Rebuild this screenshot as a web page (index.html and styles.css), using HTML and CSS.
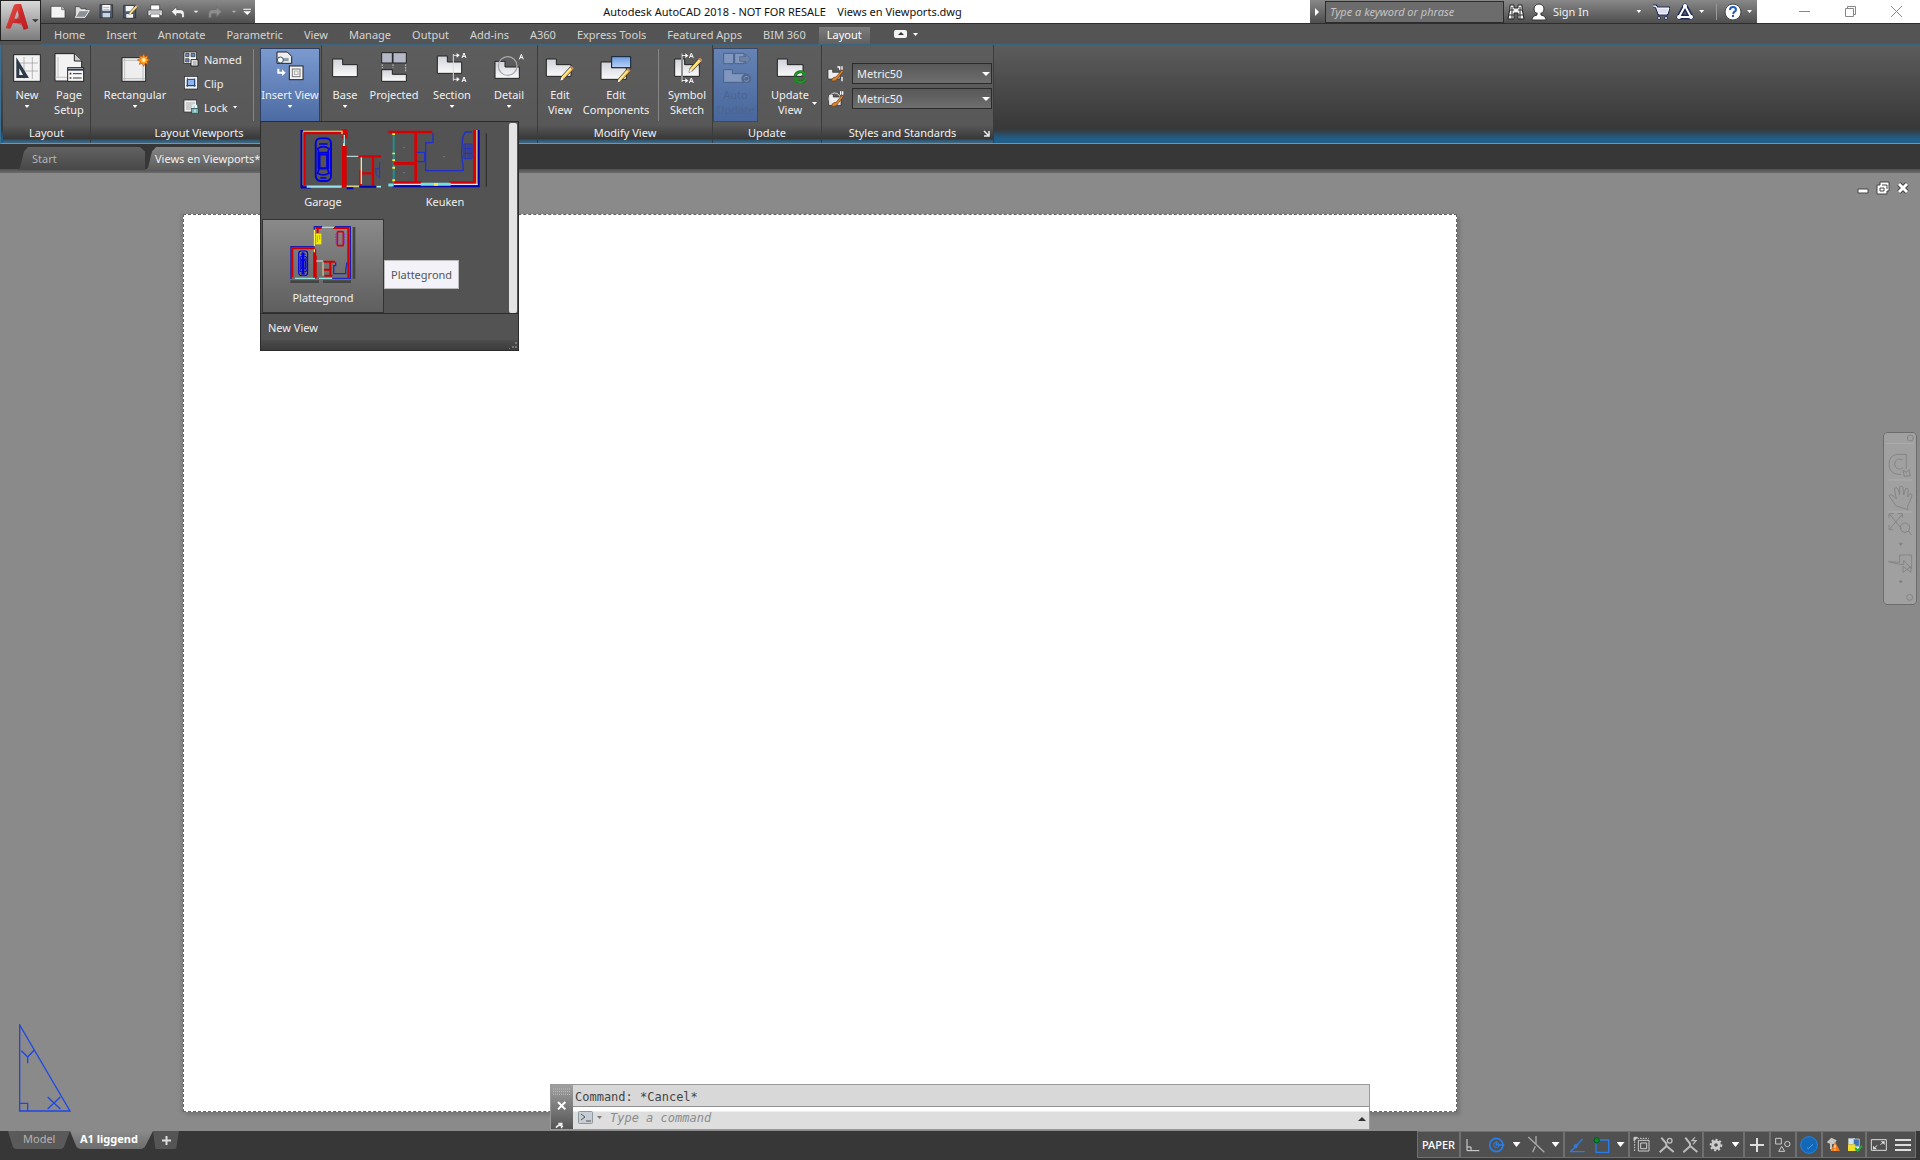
FILE: index.html
```html
<!DOCTYPE html>
<html lang="en">
<head>
<meta charset="utf-8">
<title>Autodesk AutoCAD 2018 - Views en Viewports.dwg</title>
<link rel="stylesheet" href="styles.css">
</head>
<body>
<svg class="defs" aria-hidden="true">
  <defs>
    <linearGradient id="plate" x1="0" y1="0" x2="0" y2="1"><stop offset="0" stop-color="#cfd2da"/><stop offset="1" stop-color="#fafafa"/></linearGradient>
    <linearGradient id="sky" x1="0" y1="0" x2="0" y2="1"><stop offset="0" stop-color="#6d9be0"/><stop offset="1" stop-color="#b9d3fa"/></linearGradient>
    <linearGradient id="red" x1="0" y1="0" x2="1" y2="1"><stop offset="0" stop-color="#f0524a"/><stop offset="1" stop-color="#a91519"/></linearGradient>
    <symbol id="pencil" viewBox="0 0 44 48"><path d="M3 45l3-12L32 4l9 8-27 28z" fill="#f6c646" stroke="#222" stroke-width="2"/><path d="M9 37L35 8" stroke="#fff0a8" stroke-width="4"/><path d="M31 4l10 9 2-5-7-7z" fill="#d98a5a"/><path d="M3 45l3-10 7 6z" fill="#fff"/></symbol>
    <symbol id="car" viewBox="0 0 54 134"><rect x="4" y="3" width="46" height="128" rx="15" fill="none" stroke="#0000e0" stroke-width="6"/><path d="M10 34q17-12 34 0l-4 12H14zM14 94h26l4 14q-17 10-34 0zM12 44v50M42 44v50M14 20h26M18 122h18M16 52h22v40H16z" fill="none" stroke="#0000e0" stroke-width="5"/></symbol>
  </defs>
</svg>

<header class="top">
  <button class="app-button" aria-label="Application menu">
    <svg width="40" height="40" viewBox="0 0 120 120"><path d="M14 82L38 14q2-5 8-5h14L82 82l-14 4-7-20H36l-8 17zM40 53h16l-7-26z" fill="url(#red)"/><path d="M36 66q28 0 38 20l8-4L60 9q-2 40-24 57z" fill="#c9242a" opacity=".6"/><path d="M93 55h20l-10 9z" fill="#333"/></svg>
  </button>
  <div class="titlebar">
    <div class="qat">
      <button aria-label="New file"><svg width="24" height="22" viewBox="138 3 72 66"><path d="M153 19h32l10 10v25h-42z" fill="#f4f4f4" stroke="#333" stroke-width="2"/><path d="M185 19v10h10" fill="#bbb" stroke="#555" stroke-width="2"/></svg></button>
      <button aria-label="Open"><svg width="24" height="22" viewBox="208 3 72 66"><path d="M224 50V20h12l5 6h15v7" fill="#ddd" stroke="#333" stroke-width="2"/><path d="M224 52l12-20h30l-13 20z" fill="#8b9098" stroke="#eee" stroke-width="3"/></svg></button>
      <button aria-label="Save"><svg width="24" height="22" viewBox="281 3 72 66"><path d="M299 14h38v39h-38z" fill="#4d5a70" stroke="#222" stroke-width="2"/><path d="M306 15h24v17h-24z" fill="#fff"/><path d="M309 22h18M309 28h18" stroke="#889" stroke-width="2"/><path d="M307 39h22v13h-22z" fill="#c8d4e6"/></svg></button>
      <button aria-label="Save as"><svg width="25" height="22" viewBox="353 3 75 66"><path d="M370 16h36v38h-36z" fill="#4d5a70" stroke="#222" stroke-width="2"/><path d="M376 18h24v16h-24zM378 42h20v11h-20z" fill="#f4f4f4"/><use href="#pencil" x="384" y="12" width="30" height="36"/></svg></button>
      <button aria-label="Plot"><svg width="24" height="22" viewBox="426 3 72 66"><path d="M449 15h27v16h-27z" fill="#fff" stroke="#333" stroke-width="2"/><path d="M441 30h43v17h-43z" fill="#dfe2e8" stroke="#333" stroke-width="2"/><path d="M449 42h27v11h-27z" fill="#fff" stroke="#555" stroke-width="2"/><path d="M446 36h33" stroke="#777" stroke-width="2"/></svg></button>
      <button aria-label="Undo"><svg width="22" height="22" viewBox="500 3 66 66"><path d="M513 35l16-15v9h13q10 0 10 11v13h-8v-9q0-3-4-3h-11v10z" fill="#f2f2f2" stroke="#444" stroke-width="2"/></svg></button>
      <button aria-label="Undo list"><svg width="14" height="22" viewBox="566 3 42 66"><path d="M580 32h14l-7 7z" fill="#eee"/></svg></button>
      <button aria-label="Redo"><svg width="24" height="22" viewBox="606 3 72 66"><path d="M662 35l-16-15v9h-13q-10 0-10 11v13h8v-9q0-3 4-3h11v10z" fill="#8d8d8d" stroke="#6a6a6a" stroke-width="2"/></svg></button>
      <button aria-label="Redo list"><svg width="14" height="22" viewBox="673 3 42 66"><path d="M687 32h14l-7 7z" fill="#aaa"/></svg></button>
      <button aria-label="Customize"><svg width="14" height="22" viewBox="720 3 42 66"><path d="M727 26h23v3h-23zM727 34h23l-11 11z" fill="#fff"/></svg></button>
    </div>
    <h1 class="doc-title">Autodesk AutoCAD 2018 - NOT FOR RESALE&nbsp;&nbsp;&nbsp; Views en Viewports.dwg</h1>
    <div class="infocenter">
      <button class="info-toggle" aria-label="Collapse search"><svg width="6" height="10"><path d="M1 1l4 4-4 4z" fill="#fff"/></svg></button>
      <input class="search" type="text" placeholder="Type a keyword or phrase" aria-label="Search">
      <button class="w24" aria-label="Find"><svg width="18" height="18"><path d="M3 2h4v3h4V2h4v3l2 11h-6v-6H7v6H1L3 5z" fill="#f2f2f2" stroke="#222"/><path d="M3 7h4M11 7h4M2 12h5M11 12h5M5 4v12M13 4v12" stroke="#333"/></svg></button>
      <button class="sign-in"><svg width="16" height="18"><circle cx="8" cy="6" r="5" fill="#fff" stroke="#333"/><path d="M1 17q0-4 5-5V9h4v3q5 1 5 5z" fill="#fff" stroke="#333"/><circle cx="8" cy="6" r="4" fill="#fff"/></svg><span>Sign In</span><i class="caret"></i></button>
      <button class="w24" aria-label="Store"><svg width="18" height="18"><path d="M1 3h3l3 8h8l2-6H5" fill="#fff" stroke="#1d2a5c" stroke-width="3"/><path d="M1 3h3l3 8h8l2-6H5" fill="#dde" stroke="#fff"/><circle cx="7" cy="15" r="1.500" fill="#fff" stroke="#1d2a5c"/><circle cx="14" cy="15" r="1.500" fill="#fff" stroke="#1d2a5c"/></svg></button>
      <button class="w24" aria-label="App store"><svg width="18" height="18"><path d="M9 3L3 14h12z" fill="none" stroke="#1d2a5c" stroke-width="5" stroke-linejoin="round"/><path d="M9 3L3 14h12z" fill="none" stroke="#fff" stroke-width="2"/><g fill="#fff"><circle cx="9" cy="3" r="2"/><circle cx="3" cy="14" r="2"/><circle cx="15" cy="14" r="2"/></g></svg></button>
      <button class="w12" aria-label="App store list"><i class="caret"></i></button>
      <span class="info-sep"></span>
      <button class="w24" aria-label="Help"><svg width="18" height="18"><circle cx="9" cy="9" r="8" fill="#fff" stroke="#444"/><path d="M6 7q0-3 3-3t3 3q0 1-2 2l-1 2M9 12v2" fill="none" stroke="#1f5bc0" stroke-width="2"/></svg></button>
      <button class="w12" aria-label="Help list"><i class="caret"></i></button>
    </div>
    <div class="window-buttons">
      <button aria-label="Minimize"><svg width="11" height="11"><path d="M0 5.500h11" stroke="#888"/></svg></button>
      <button aria-label="Restore"><svg width="11" height="11"><path d="M.5 2.500h8v8h-8zM2.500 2V.5h8v8H9" fill="none" stroke="#888"/></svg></button>
      <button aria-label="Close"><svg width="11" height="11"><path d="M0 0l11 11M11 0L0 11" stroke="#888"/></svg></button>
    </div>
  </div>
  <nav class="tabs">
    <a href="#home">Home</a><a href="#insert">Insert</a><a href="#annotate">Annotate</a><a href="#parametric">Parametric</a><a href="#view">View</a><a href="#manage">Manage</a><a href="#output">Output</a><a href="#addins">Add-ins</a><a href="#a360">A360</a><a href="#express">Express Tools</a><a href="#featured">Featured Apps</a><a href="#bim">BIM 360</a><a class="active" href="#layout">Layout</a>
    <button aria-label="Minimize ribbon"><svg width="24" height="10"><rect y="1" width="13" height="8" rx="2" fill="#f4f4f4"/><path d="M4 6l3-3 3 3z" fill="#333"/><path d="M19 4h5l-2.500 3z" fill="#fff"/></svg></button>
  </nav>
</header>

<section class="ribbon">
  <div class="panel p-layout">
    <div class="tools">
      <button class="big w42"><svg width="32" height="32" viewBox="33 153 96 96"><rect x="41" y="164" width="80" height="80" fill="#f3f3f3" stroke="#222" stroke-width="3"/><path d="M48 189h66M48 213h66M72 171v66M97 171v66" stroke="#999" stroke-width="2"/><path d="M49 172l38 62H49z" fill="#2e3b4b"/><path d="M58 205l11 20H58z" fill="#f3f3f3"/></svg><span>New</span><i class="caret"></i></button>
      <button class="big w42"><svg width="32" height="32" viewBox="158 153 96 96"><path d="M164 161h58l22 22v60h-80z" fill="#f3f3f3" stroke="#222" stroke-width="3"/><path d="M222 161v22h22" fill="#ccc" stroke="#222" stroke-width="3"/><path d="M173 171v60M164 232h36" stroke="#aaa" stroke-width="2"/><rect x="202" y="203" width="48" height="41" fill="#f8f8f8" stroke="#222" stroke-width="3"/><path d="M202 209h48" stroke="#2e3b4b" stroke-width="6"/><path d="M218 221h26M218 234h26" stroke="#333" stroke-width="3"/><path d="M208 221h5M208 234h5" stroke="#333" stroke-width="5"/></svg><span>Page<br>Setup</span></button>
    </div>
    <div class="panel-title">Layout</div>
  </div>
  <div class="panel p-viewports">
    <div class="tools">
      <button class="big w70"><svg width="32" height="32" viewBox="357 153 96 96"><rect x="366" y="173" width="71" height="71" fill="#eee" stroke="#222" stroke-width="3"/><path d="M374 174v69M429 174v69M367 181h69M367 236h69" stroke="#aaa" stroke-width="2"/><path d="M431 161l4 9 9-3-3 9 9 4-9 4 3 9-9-3-4 9-4-9-9 3 3-9-9-4 9-4-3-9 9 3z" fill="#ff9c1c" stroke="#c74a08" stroke-width="2"/><circle cx="431" cy="180" r="6" fill="#ffec9a"/></svg><span>Rectangular</span><i class="caret"></i></button>
      <div class="small-stack">
        <button><svg width="16" height="16" viewBox="549 156 48 48"><rect x="552" y="159" width="37" height="34" fill="#f4f4f4" stroke="#222" stroke-width="2"/><path d="M557 163h10v10h-10zM573 163h12v10h-12zM557 179h10v10h-10z" fill="#6684b3" stroke="#333" stroke-width="2"/><path d="M573 182h21v19h-21z" fill="#fff" stroke="#222" stroke-width="3"/><path d="M578 189h12M578 195h12" stroke="#333" stroke-width="2"/></svg><span>Named</span></button>
        <button><svg width="16" height="16" viewBox="549 230 48 48"><rect x="553" y="234" width="40" height="38" fill="#f4f4f4" stroke="#222" stroke-width="2"/><path d="M562 243h22v19h-22z" fill="#8fb4ee" stroke="#173b7a" stroke-width="3"/><path d="M562 238v28M584 240v26M558 262h30" stroke="#173b7a" stroke-width="2"/></svg><span>Clip</span></button>
        <button><svg width="16" height="16" viewBox="549 300 48 48"><rect x="552" y="303" width="38" height="36" fill="#f0f0f0" stroke="#222" stroke-width="2"/><path d="M558 309h27v24h-27z" fill="#ccc"/><path d="M578 328v-5q0-6 6-6t6 6v5" fill="none" stroke="#dff" stroke-width="4"/><rect x="575" y="328" width="20" height="16" fill="#7fb0b0" stroke="#244" stroke-width="2"/><path d="M585 332v8" stroke="#fff" stroke-width="3"/></svg><span>Lock</span><i class="caret"></i></button>
      </div>
      <span class="sep"></span>
      <div class="menu-anchor">
        <button class="big w58 pressed" aria-expanded="true"><svg width="32" height="32" viewBox="71 153 96 96"><path d="M80 156h31l13 13v21H80z" fill="#eee" stroke="#222" stroke-width="3"/><path d="M96 173h20v12H96z" fill="#89a" stroke="#fff" stroke-width="2"/><circle cx="90" cy="180" r="9" fill="#fff" stroke="#356" stroke-width="3"/><path d="M81 206h6v9h8v-7l11 10-11 10v-7H81z" fill="#fff"/><rect x="117" y="198" width="41" height="41" fill="#f4f4f4" stroke="#222" stroke-width="3"/><rect x="126" y="207" width="23" height="23" fill="none" stroke="#777" stroke-width="3"/><rect x="132" y="213" width="11" height="11" fill="#eee" stroke="#999" stroke-width="2"/></svg><span>Insert View</span><i class="caret"></i></button>
        <div class="gallery">
          <div class="gallery-body">
            <div class="tiles">
              <button class="tile">
                <svg width="122" height="64" viewBox="36 48 366 192" fill="none"><path d="M155 60v172M152 232h30" stroke="#0000b8" stroke-width="7"/><path d="M160 65v160M160 64h125" stroke="#ffe94a" stroke-width="4"/><path d="M163 70v155M160 69h128M275 62h14v20h-14" stroke="#d80000" stroke-width="7"/><path d="M283 75v38" stroke="#9be0e0" stroke-width="4"/><path d="M283 108v124" stroke="#d80000" stroke-width="14"/><path d="M170 230h105" stroke="#9be0f0" stroke-width="7"/><path d="M276 62v10M281 100v8" stroke="#ffe94a" stroke-width="4"/><path d="M290 139h38" stroke="#c8f0f0" stroke-width="3"/><path d="M325 139h68M332 190h36M369 139v91M331 180v50" stroke="#d80000" stroke-width="7"/><path d="M334 142v80" stroke="#f4e6a0" stroke-width="4"/><path d="M290 229h38" stroke="#d8d080" stroke-width="5"/><path d="M290 235h20M328 230h50" stroke="#0000b8" stroke-width="6"/><path d="M380 230h13" stroke="#aaf0f0" stroke-width="5"/><path d="M389 156v50M375 176h14M378 176v18l10 8" stroke="#2838b0" stroke-width="3"/><use href="#car" x="193" y="82" width="54" height="134"/></svg>
                <span>Garage</span></button>
              <button class="tile">
                <svg width="122" height="64" viewBox="405 48 366 192" fill="none"><path d="M434 70v150" stroke="#209090" stroke-width="6"/><path d="M418 66h132M500 64v154M434 160h66M434 218h84M600 218h76" stroke="#d80000" stroke-width="8"/><path d="M677 60v160" stroke="#d80000" stroke-width="10"/><path d="M684 60v164" stroke="#ffe9a0" stroke-width="4"/><path d="M689 60v172M430 229h260" stroke="#0000a8" stroke-width="6"/><path d="M434 223h252" stroke="#e4e4ff" stroke-width="4"/><path d="M515 223h90M418 225h16" stroke="#70e0e0" stroke-width="9"/><path d="M434 70v5M434 128v5M434 148v5M434 170v6M434 208v6M555 223h12" stroke="#ffe94a" stroke-width="8"/><path d="M552 68v30h-22v84h112v-18q-8-30 0-84l7-14h20M503 127h24v28h-24" stroke="#2030c8" stroke-width="4"/><path d="M645 102h24v44h-24zM650 104v40M657 104v40M663 104v40M645 116h24M645 130h24" stroke="#2030c8" stroke-width="3"/><path d="M712 70v160" stroke="#333" stroke-width="4"/><path d="M462 113h6M462 188h6M582 140h6" stroke="#777" stroke-width="3"/></svg>
                <span>Keuken</span></button>
              <button class="tile selected">
                <svg width="122" height="64" viewBox="39 339 366 192" fill="none"><path d="M315 354v155M124 518h86M222 518h84" stroke="#444" stroke-width="8"/><path d="M126 415v95M124 413h72M304 352v158M196 352v62M196 353h24M258 353h46" stroke="#1a1ab0" stroke-width="4"/><path d="M130 420v85M128 418h70M200 357h18M252 357h48M298 357v150M200 440v68M206 358v14" stroke="#d00000" stroke-width="6"/><path d="M197 420v88" stroke="#d00000" stroke-width="9"/><path d="M219 355h36M138 508h60M210 508h40" stroke="#90e0e0" stroke-width="4"/><path d="M196 362v50M196 420v10" stroke="#f8f060" stroke-width="4"/><path d="M200 374h17v32h-17z" fill="#f4ee00"/><path d="M205 380v20M212 378v14" stroke="#998800" stroke-width="2"/><rect x="265" y="368" width="18" height="42" rx="3" stroke="#d00018" stroke-width="5"/><path d="M261 374v32M286 374v32" stroke="#8838d0" stroke-width="4" stroke-dasharray="5 3"/><path d="M202 456h20" stroke="#c8f0f0" stroke-width="3"/><path d="M224 458h34M224 482h22M226 500h24M244 458v44" stroke="#d00000" stroke-width="6"/><path d="M222 460v40" stroke="#eee0a0" stroke-width="3"/><path d="M260 460v10h-6v24h36v-10l4-24M250 508h52" stroke="#1c2cc8" stroke-width="4"/><use href="#car" x="146" y="424" width="33" height="78"/><path d="M162 430v66" stroke="#0000e0" stroke-width="8"/></svg>
                <span>Plattegrond</span></button>
            </div>
            <div class="scroll-thumb"></div>
          </div>
          <button class="new-view">New View</button>
          <div class="gallery-foot"><svg width="10" height="10"><path d="M7 2h2v2H7zM4 6h2v2H4zM7 6h2v2H7zM1 8h1v1H1z" fill="#777"/></svg></div>
          <div class="tooltip" role="tooltip">Plattegrond</div>
        </div>
      </div>
    </div>
    <div class="panel-title">Layout Viewports</div>
  </div>
  <div class="panel p-create">
    <div class="tools">
      <button class="big w44"><svg width="32" height="32" viewBox="237 153 96 96"><path d="M248 177h30v17h44v36h-74z" fill="url(#plate)" stroke="#222" stroke-width="3"/></svg><span>Base</span><i class="caret"></i></button>
      <button class="big w54"><svg width="32" height="32" viewBox="384 153 96 96"><path d="M395 158h32v31h-32zM429 158h40v31h-40z" fill="#b4b8c6" stroke="#222" stroke-width="3"/><path d="M395 209h32v14h42v21h-74z" fill="url(#plate)" stroke="#222" stroke-width="3"/><path d="M397 193v12M429 193v10M467 193v24" stroke="#fff" stroke-width="2" stroke-dasharray="5 3"/></svg><span>Projected</span></button>
      <button class="big w62"><svg width="32" height="32" viewBox="559 153 96 96"><path d="M563 168h30v18h43v34h-73z" fill="url(#plate)" stroke="#222" stroke-width="3"/><path d="M611 162v80M611 166h14M611 238h14" stroke="#ddd" stroke-width="3"/><path d="M621 159l9 7-9 7zM621 231l9 7-9 7z" fill="#fff"/><path d="M637 174l6-15 6 15M639 169h8M637 246l6-15 6 15M639 241h8" fill="none" stroke="#fff" stroke-width="3"/></svg><span>Section</span><i class="caret"></i></button>
      <button class="big w52"><svg width="32" height="32" viewBox="729 153 96 96"><path d="M735 184h30v17h43v34h-73z" fill="url(#plate)" stroke="#222" stroke-width="3"/><circle cx="773" cy="198" r="28" fill="none" stroke="#aaa" stroke-width="4"/><path d="M808 178l6-15 6 15M810 173h8" fill="none" stroke="#fff" stroke-width="3"/></svg><span>Detail</span><i class="caret"></i></button>
    </div>
    <div class="panel-title"></div>
  </div>
  <div class="panel p-modify">
    <div class="tools">
      <button class="big w42"><svg width="32" height="32" viewBox="42 153 96 96"><path d="M49 177h30v17h44v35H49z" fill="url(#plate)" stroke="#222" stroke-width="3"/><use href="#pencil" x="88" y="196" width="44" height="50"/></svg><span>Edit<br>View</span></button>
      <button class="big w70"><svg width="32" height="32" viewBox="209 153 96 96"><path d="M212 186h32v17h44v35h-76z" fill="url(#plate)" stroke="#222" stroke-width="3"/><rect x="244" y="170" width="57" height="33" fill="url(#sky)" stroke="#123" stroke-width="3"/><use href="#pencil" x="258" y="204" width="44" height="46"/></svg><span>Edit<br>Components</span></button>
      <span class="sep"></span>
      <button class="big w44"><svg width="32" height="32" viewBox="423 153 96 96"><path d="M434 177h30v17h44v35h-74z" fill="url(#plate)" stroke="#222" stroke-width="3"/><path d="M456 160v86M456 167h14M456 242h14" stroke="#222" stroke-width="6"/><path d="M456 160v86M456 167h14M456 242h14" stroke="#fff" stroke-width="3"/><path d="M466 160l9 7-9 7zM466 235l9 7-9 7z" fill="#fff"/><path d="M478 174l6-15 6 15M480 169h8M478 249l6-15 6 15M480 244h8" fill="none" stroke="#fff" stroke-width="3"/><use href="#pencil" x="474" y="172" width="44" height="48"/></svg><span>Symbol<br>Sketch</span></button>
    </div>
    <div class="panel-title">Modify View</div>
  </div>
  <div class="panel p-update">
    <div class="tools">
      <button class="big w43 disabled" disabled><svg width="32" height="32" viewBox="573 153 96 96"><path d="M584 160h30v31h-30zM617 160h28v31h-28z" fill="#8197bd" stroke="#4a628c" stroke-width="3"/><path d="M584 209h26v12h40v26h-66z" fill="#8197bd" stroke="#4a628c" stroke-width="3"/><path d="M632 170h18v-8l15 15-15 15v-8h-18z" fill="#7183a3" stroke="#4a628c" stroke-width="2"/><circle cx="652" cy="236" r="15" fill="#52698f"/><path d="M645 236a8 8 0 0 1 14-4M660 237a8 8 0 0 1-14 4" fill="none" stroke="#8197bd" stroke-width="3"/></svg><span>Auto<br>Update</span></button>
      <button class="big w58"><svg width="32" height="32" viewBox="729 153 96 96"><path d="M739 177h30v17h47v35h-77z" fill="url(#plate)" stroke="#222" stroke-width="3"/><path d="M793 229a16 14 0 0 1 28-9M824 233a16 14 0 0 1-29 8" fill="none" stroke="#176c1c" stroke-width="9"/><path d="M793 229a16 14 0 0 1 28-9M824 233a16 14 0 0 1-29 8" fill="none" stroke="#23982b" stroke-width="5"/><path d="M827 212v17h-18zM790 249v-17h17z" fill="#1d8d25"/></svg><span>Update<br>View</span><i class="caret side"></i></button>
    </div>
    <div class="panel-title">Update</div>
  </div>
  <div class="panel p-styles">
    <div class="tools styles">
      <label><svg width="18" height="18" viewBox="114 195 54 54"><path d="M117 208h14v9h22v20h-36z" fill="#eee" stroke="#222" stroke-width="2"/><path d="M145 201h6M152 199v10M159 199v10M159 230v14" stroke="#fff" stroke-width="4"/><path d="M127 242q4-12 14-11l18-21 4 4-17 22q-5 10-19 6z" fill="#d98532" stroke="#6d3a0c" stroke-width="2"/></svg><select aria-label="Section view style"><option>Metric50</option></select></label>
      <label><svg width="18" height="18" viewBox="114 270 54 54"><path d="M119 283h14v8h23v25h-37z" fill="#eee" stroke="#222" stroke-width="2"/><circle cx="137" cy="296" r="17" fill="none" stroke="#ddd" stroke-width="3"/><path d="M155 274v10M161 274v10" stroke="#fff" stroke-width="4"/><path d="M127 318q4-12 14-11l18-21 4 4-17 22q-5 10-19 6z" fill="#d98532" stroke="#6d3a0c" stroke-width="2"/></svg><select aria-label="Detail view style"><option>Metric50</option></select></label>
    </div>
    <div class="panel-title">Styles and Standards<svg class="launcher" width="7" height="7"><path d="M1 1l4 4M6 1v5H1" fill="none" stroke="#eee" stroke-width="1.500"/></svg></div>
  </div>
</section>

<nav class="file-tabs">
  <a href="#start" class="start">Start</a>
  <a href="#views" class="current">Views en Viewports*</a>
</nav>

<main class="canvas">
  <div class="paper"></div>
  <div class="mdi">
    <button aria-label="Minimize drawing"><svg width="14" height="14"><path d="M2 8h10v4H2z" fill="#fff" stroke="#444"/></svg></button>
    <button aria-label="Restore drawing"><svg width="14" height="14"><path d="M4 1h9v9h-2v3H1V4h3z" fill="#fff" stroke="#444"/><path d="M4 7h4v3H4zM6 4h5v4" fill="none" stroke="#444"/></svg></button>
    <button aria-label="Close drawing"><svg width="14" height="14"><path d="M3 3l8 8M11 3l-8 8" stroke="#444" stroke-width="5"/><path d="M3 3l8 8M11 3l-8 8" stroke="#fff" stroke-width="3"/></svg></button>
  </div>
  <div class="navbar">
    <svg width="34" height="173" viewBox="68 37 102 519" fill="none" stroke="#858585" stroke-width="3"><path d="M84 181h72M84 277h72M78 71h84" stroke="#b5b5b5" stroke-width="2"/><circle cx="150" cy="55" r="9"/><circle cx="148" cy="533" r="9"/><path d="M138 148V104h-28q-24 4-24 30t26 30h10M128 122a15 15 0 1 0 0 22"/><path d="M128 152l10 6 8-8 4 18-18 2z"/><path d="M106 258l-20-30q6-8 14 2l8 8-6-32q8-6 12 4l4 16v-24q8-6 10 2l2 22 6-20q8-2 8 6l-2 20 8-10q8 2 4 10l-12 28v10z"/><path d="M88 284l36 44M126 284l-38 44M86 296v-14h14M112 282h14v12M86 316v14h12"/><circle cx="134" cy="324" r="14"/><path d="M144 334l10 12"/><path d="M116 371h10l-5 6zM116 484h10l-5 6z" fill="#777"/><path d="M84 426l34 2v-22h36v42l-24-26v12h-12z"/><path d="M128 440l24 18v-18l-24 18z"/></svg>
  </div>
  <svg class="ucs" width="52" height="88" viewBox="56 43 156 264" fill="none" stroke="#1c46e8" stroke-width="4"><path d="M58 46v258h151zM58 281h24v23M63 123l19 19v19M82 142l20-21M142 262l38 36M142 298l38-36"/></svg>
  <section class="command">
    <div class="command-grip">
      <svg width="22" height="45" viewBox="0 0 66 135"><path d="M6 12h54M6 20h54M6 28h54" stroke="#c4c4c4" stroke-width="3" stroke-dasharray="3 3"/><path d="M21 51l22 22M43 51L21 73" stroke="#fff" stroke-width="6"/><path d="M15 128q12-14 20-2M22 116h10v14" fill="none" stroke="#eee" stroke-width="5"/></svg>
    </div>
    <div class="command-body">
      <div class="history">Command: *Cancel*</div>
      <div class="prompt">
        <svg width="26" height="14"><rect x=".5" y=".5" width="14" height="12" rx="1" fill="#c6cdd4" stroke="#8e989f"/><path d="M3 3l4 3-4 3M8 10h5" fill="none" stroke="#555"/><path d="M19 5h5l-2.500 3z" fill="#777"/></svg>
        <input type="text" placeholder="Type a command" aria-label="Command">
        <svg width="8" height="5"><path d="M0 5l4-4 4 4z" fill="#333"/></svg>
      </div>
    </div>
  </section>
</main>

<footer class="status">
  <nav class="layout-tabs">
    <a href="#model" class="model">Model</a><a href="#a1" class="a1">A1 liggend</a><button class="add" aria-label="New layout"><svg width="9" height="9"><path d="M4.500 0v9M0 4.500h9" stroke="#ddd" stroke-width="2"/></svg></button>
  </nav>
  <div class="status-tools">
    <div class="group"><button class="paper-toggle">PAPER</button></div>
    <div class="group">
      <button aria-label="Ortho"><svg width="24" height="24" viewBox="455 189 72 72" fill="none" stroke="#ddd" stroke-width="3"><path d="M473 207v35h37M473 231h12v11"/></svg></button>
      <button aria-label="Polar"><svg width="24" height="24" viewBox="525 188 72 72" fill="none" stroke="#2a7de8" stroke-width="5"><circle cx="559" cy="224" r="20"/><path d="M559 213v11h24" stroke-width="4"/><circle cx="559" cy="224" r="8" stroke-width="3"/></svg></button>
      <button class="arrow" aria-label="Polar settings"><i class="caret large"></i></button>
      <button aria-label="Isometric"><svg width="24" height="24" viewBox="642 188 72 72" fill="none" stroke="#aaa" stroke-width="4"><path d="M655 200l48 46M678 197v24M676 228l-8 18"/></svg></button>
      <button class="arrow" aria-label="Isometric settings"><i class="caret large"></i></button>
    </div>
    <div class="group">
      <button aria-label="Object snap tracking"><svg width="24" height="24" viewBox="763 188 72 72" fill="none" stroke="#2a7de8" stroke-width="4"><path d="M816 206l-36 38h42"/><circle cx="795" cy="228" r="4" fill="#2a7de8"/></svg></button>
      <button aria-label="Object snap"><svg width="24" height="24" viewBox="835 188 72 72" fill="none" stroke="#2a7de8" stroke-width="4"><path d="M856 209h38v37h-38z"/><circle cx="858" cy="210" r="8" fill="#0b8a1c" stroke="#053" stroke-width="3"/></svg></button>
      <button class="arrow" aria-label="Snap settings"><i class="caret large"></i></button>
    </div>
    <div class="group">
      <button aria-label="Annotation visibility"><svg width="24" height="24" viewBox="89 99 72 72" fill="none" stroke="#ccc" stroke-width="3"><path d="M114 121h32v32h-32zM121 129h18v17h-18z"/><path d="M103 153v-38M103 115h42" stroke-dasharray="5 3"/><path d="M101 112h10l-10 10z" fill="#ccc"/></svg></button>
      <button aria-label="Auto scale"><svg width="24" height="24" viewBox="161 99 72 72" fill="none" stroke="#bbb" stroke-width="6"><path d="M183 113l15 18v8l-20 18M198 137l22 19"/><circle cx="208" cy="122" r="7" stroke-width="4"/></svg></button>
      <button aria-label="Annotation scale"><svg width="24" height="24" viewBox="234 99 72 72" fill="none" stroke="#bbb" stroke-width="6"><path d="M256 113l14 18v8l-20 18M270 137l22 19"/><path d="M285 112l-9 10h12l-9 11" stroke-width="4"/></svg></button>
    </div>
    <div class="group">
      <button aria-label="Workspace"><svg width="24" height="24" viewBox="315 99 72 72"><circle cx="351" cy="135" r="10" fill="none" stroke="#ccc" stroke-width="9"/><circle cx="351" cy="135" r="16" fill="none" stroke="#ccc" stroke-width="6" stroke-dasharray="6 6"/></svg></button>
      <button class="arrow" aria-label="Workspace settings"><i class="caret large"></i></button>
    </div>
    <div class="group"><button aria-label="Annotation monitor"><svg width="24" height="24"><path d="M12 5v14M5 12h14" stroke="#ddd" stroke-width="2"/></svg></button></div>
    <div class="group"><button aria-label="Quick properties"><svg width="24" height="24" viewBox="515 97 72 72" fill="none" stroke="#ccc" stroke-width="3"><path d="M529 113h17v17h-17zM547 137l9 15h-18z"/><circle cx="564" cy="130" r="8"/></svg></button></div>
    <div class="group"><button aria-label="Graphics performance"><svg width="24" height="24" viewBox="597 99 72 72"><circle cx="633" cy="135" r="25" fill="#1568b8" stroke="#1e86e8" stroke-width="3"/><path d="M627 143l4 3 14-13" fill="none" stroke="#4aa2f0" stroke-width="3"/></svg></button></div>
    <div class="group pair">
      <button aria-label="License"><svg width="21" height="24" viewBox="679 99 63 72"><path d="M690 127l14-14 16 8-6 10-8 2v18l-6-4v-16z" fill="#c6c6c6"/><path d="M715 125l15 28h-28z" fill="#f07a1c"/><path d="M715 134v10M715 147v4" stroke="#fff" stroke-width="3"/></svg></button>
      <button aria-label="Updates"><svg width="21" height="24" viewBox="736 99 63 72"><path d="M749 115h20v18h-20z" fill="#d5e4f2"/><path d="M764 117h18v22h-18z" fill="#3c72b4" stroke="#d5e4f2" stroke-width="2"/><path d="M748 133h22v20h-22z" fill="#f2dc2c"/><path d="M770 140h12v12h-12z" fill="#eee"/><path d="M770 144l7 8 13-14" fill="none" stroke="#28a834" stroke-width="6"/></svg></button>
    </div>
    <div class="group">
      <button aria-label="Clean screen"><svg width="24" height="24" viewBox="810 99 72 72" fill="none" stroke="#ddd" stroke-width="3"><path d="M823 119h45v32h-45z"/><path d="M850 134l8-6M832 144l9-8"/><path d="M851 124h12v11zM828 137v11h12z" fill="#ddd" stroke="none"/></svg></button>
      <button aria-label="Customization"><svg width="24" height="24"><path d="M4 7h16M4 12h16M4 17h16" stroke="#ddd" stroke-width="2"/></svg></button>
    </div>
  </div>
</footer>
</body>
</html>
```
FILE: styles.css
```css
* { box-sizing: border-box; }

body {
  margin: 0;
  min-height: 100vh;
  display: flex;
  flex-direction: column;
  background: #373737;
  color: #f0f0f0;
  font: 11px/15px "Noto Sans", "Open Sans", sans-serif;
}

button, input, select {
  font: inherit;
  color: inherit;
  border: 0;
  padding: 0;
  margin: 0;
  background: none;
}

a { color: inherit; text-decoration: none; }
svg { display: block; flex: none; }
.defs { position: absolute; width: 0; height: 0; }

.caret {
  display: block;
  width: 5px;
  height: 3px;
  flex: none;
  background: #fff;
  clip-path: polygon(0 0, 100% 0, 50% 100%);
}
.caret.large { width: 8px; height: 5px; }

/* Title bar and ribbon tabs */
.top {
  display: grid;
  grid-template-columns: 41px 1fr;
  grid-template-rows: 24px 21px;
  background: #545454;
}
.app-button {
  grid-row: 1 / 3;
  height: 41px;
  border: 1px solid #222;
  background: linear-gradient(#d8d8d8, #7c7c7c);
  overflow: hidden;
  z-index: 1;
}
.titlebar {
  display: flex;
  background: #fff;
  border-bottom: 1px solid #2e2e2e;
}
.qat, .infocenter {
  display: flex;
  flex: none;
  align-items: center;
  background: linear-gradient(#888, #4e4e4e);
}
.qat { width: 214px; padding-left: 5px; }
.doc-title {
  flex: 1;
  margin: 0;
  color: #111;
  font-size: 11px;
  font-weight: 400;
  line-height: 23px;
  text-align: center;
}
.infocenter { width: 447px; }
.info-toggle { width: 15px; padding-left: 4px; }
.search {
  width: 180px;
  height: 22px;
  padding: 0 4px;
  border: 1px solid #2c2c2c;
  background: #6c6c6c;
}
.search::placeholder { color: #c4c4c4; font-style: italic; opacity: 1; }
.w24 { width: 24px; padding-left: 3px; }
.w12 { width: 12px; padding-left: 2px; }
.sign-in {
  width: 122px;
  padding: 0 8px 0 3px;
  display: flex;
  align-items: center;
  gap: 6px;
}
.sign-in .caret { margin-left: auto; }
.info-sep { width: 1px; height: 16px; margin: 0 4px 0 7px; background: #999; }
.window-buttons { width: 163px; display: flex; padding-left: 24px; }
.window-buttons button { width: 46px; display: grid; place-items: center; }

.tabs {
  display: flex;
  gap: 21px;
  padding-left: 13px;
  color: #d4d4d4;
  border-bottom: 1px solid #3a6480;
  line-height: 21px;
}
.tabs .active {
  margin: 3px -8px 0;
  padding: 0 8px;
  line-height: 15px;
  color: #fff;
  background: linear-gradient(#7c7c7c, #606060);
}
.tabs button { margin-left: 11px; }

/* Ribbon */
.ribbon {
  display: flex;
  height: 99px;
  padding-left: 2px;
  border-left: 1px solid #3a6f92;
  border-bottom: 1px solid #5c9cc4;
  background: linear-gradient(#5c5c5c, #3a3a3a 80px, #383838 84px, #1f5f8c 94px, #1f5f8c);
  position: relative;
  z-index: 2;
}
.panel {
  display: flex;
  flex-direction: column;
  border-right: 1px solid #3c3c3c;
  background: linear-gradient(#5d5d5d, #585858 80px, #383838 94px, #2f5570 95px, #3f6a86);
}
.p-layout { width: 88px; }
.p-viewports { width: 231px; }
.p-create { width: 216px; }
.p-modify { width: 175px; }
.p-update { width: 109px; }
.p-styles { width: 172px; }

.tools { display: flex; height: 80px; padding-top: 4px; }
.p-layout .tools { padding-left: 3px; }
.p-viewports .tools { padding-left: 9px; }
.p-create .tools, .p-modify .tools, .p-update .tools { padding-left: 1px; }
.p-update .tools { gap: 4px; }

.big {
  height: 72px;
  padding-top: 2px;
  display: flex;
  flex-direction: column;
  align-items: center;
  position: relative;
  white-space: nowrap;
}
.big span { margin-top: 4px; }
.big .caret { margin-top: 3px; }
.w42 { width: 42px; }
.w43 { width: 43px; }
.w44 { width: 44px; }
.w52 { width: 52px; }
.w54 { width: 54px; }
.w58 { width: 58px; }
.w62 { width: 62px; }
.w70 { width: 70px; }
.big .side { position: absolute; right: 2px; bottom: 16px; }
.pressed { background: linear-gradient(#7a9ad0, #4c6ba3); outline: 1px solid #2c3f63; }
.disabled {
  background: linear-gradient(#6683b5, #48679c);
  outline: 1px solid #34496e;
  color: #4b648f;
}

.small-stack {
  display: flex;
  flex-direction: column;
  width: 83px;
  margin-top: -2px;
  padding-left: 13px;
}
.small-stack button {
  display: flex;
  align-items: center;
  gap: 5px;
  height: 24px;
}
.sep { width: 1px; height: 72px; margin-right: 7px; background: #858585; }
.p-modify .sep { margin: 0 6px 0 7px; }

.panel-title {
  height: 16px;
  display: flex;
  justify-content: center;
  align-items: center;
  position: relative;
  line-height: 16px;
}
.p-viewports .panel-title { padding-right: 14px; }
.p-styles .panel-title { padding-right: 10px; }
.launcher { position: absolute; right: 3px; top: 5px; }

.styles { flex-direction: column; gap: 4px; padding: 18px 0 0 5px; }
.styles label { display: flex; align-items: center; gap: 7px; position: relative; width: 165px; }
.styles select {
  width: 140px;
  height: 21px;
  padding: 0 4px;
  border: 1px solid #2b2b2b;
  appearance: none;
  background: linear-gradient(#585858, #6e6e6e);
}
.styles label::after {
  content: "";
  width: 8px;
  height: 4px;
  position: absolute;
  right: 2px;
  top: 9px;
  background: #fff;
  clip-path: polygon(0 0, 100% 0, 50% 100%);
}

/* Insert View gallery */
.menu-anchor { position: relative; }
.gallery {
  position: absolute;
  left: -1px;
  top: 72px;
  width: 259px;
  border: 1px solid #2c2c2c;
  background: #535353;
}
.gallery-body { display: flex; padding: 1px 1px 0; gap: 2px; }
.tiles {
  flex: 1;
  display: grid;
  grid-template-columns: 122px 122px;
  grid-auto-rows: 94px;
  row-gap: 2px;
}
.tile {
  display: flex;
  flex-direction: column;
  align-items: center;
  padding-top: 3px;
}
.tile span { margin-top: 4px; }
.selected { background: linear-gradient(#8a8a8a, #5e5e5e); outline: 1px solid #333; outline-offset: -1px; }
.scroll-thumb { width: 8px; border-radius: 2px; background: #e4e4e4; }
.new-view {
  display: block;
  width: 100%;
  height: 27px;
  padding-left: 7px;
  border-top: 1px solid #2c2c2c;
  text-align: left;
}
.gallery-foot {
  display: flex;
  justify-content: flex-end;
  height: 10px;
  background: linear-gradient(#4c4c4c, #3c3c3c);
}
.tooltip {
  position: absolute;
  left: 123px;
  top: 138px;
  padding: 6px;
  border: 1px solid #bbb;
  background: #f2f2f8;
  color: #555;
}

/* Drawing tabs */
.file-tabs {
  display: flex;
  height: 29px;
  padding: 3px 0 0 17px;
  background: linear-gradient(#373737 25px, #505050 25px, #6c6c6c);
}
.file-tabs a {
  height: 23px;
  line-height: 23px;
  padding-left: 15px;
  white-space: nowrap;
  clip-path: polygon(0 100%, 3px 90%, 7px 20%, 11px 0, 96% 0, 100% 20%, 100% 100%);
}
.start { width: 128px; color: #b4b4b4; background: linear-gradient(#626262, #484848); }
.file-tabs .current { width: 140px; padding-left: 10px; background: linear-gradient(#868686, #5c5c5c); }

/* Paper space */
.canvas {
  flex: 1;
  display: flex;
  position: relative;
  padding: 41px 463px 19px 183px;
  background: #8a8a8a;
}
.paper {
  flex: 1;
  background: #fff;
  border: 1px dashed #666;
  box-shadow: 3px 3px 3px #787878, -2px 0 3px #7c7c7c;
}
.mdi { position: absolute; top: 8px; right: 10px; display: flex; gap: 6px; }
.navbar {
  position: absolute;
  right: 3px;
  top: 259px;
  border-radius: 4px;
  background: #a0a0a0;
  outline: 1px solid #6c6c6c;
  outline-offset: -1px;
}
.ucs { position: absolute; left: 19px; bottom: 19px; }

.command {
  position: absolute;
  left: 550px;
  right: 550px;
  bottom: 1px;
  height: 46px;
  display: flex;
  background: #d8d8d8;
  border: 1px solid #999;
}
.command-grip { width: 22px; overflow: hidden; background: linear-gradient(#a0a0a0, #555); }
.command-body {
  flex: 1;
  color: #444;
  font: 12px/22px "DejaVu Sans Mono", "Liberation Mono", monospace;
}
.history { height: 22px; padding-left: 2px; border-bottom: 1px solid #909090; line-height: 24px; }
.prompt {
  height: 22px;
  display: flex;
  align-items: center;
  gap: 6px;
  padding: 0 3px 0 5px;
  background: linear-gradient(#fff 4px, #dedede 5px);
}
.prompt input { flex: 1; outline: 0; }
.prompt input::placeholder { color: #8c8c8c; font-style: italic; opacity: 1; }

/* Status bar */
.status { display: flex; justify-content: space-between; height: 29px; }
.layout-tabs { display: flex; padding-left: 8px; height: 18px; line-height: 16px; }
.layout-tabs a, .add { clip-path: polygon(0 0, 100% 0, 90% 90%, 86% 100%, 12% 100%, 8% 90%); }
.model { width: 62px; padding-left: 15px; color: #b4b4b4; background: #5a5a5a; }
.a1 { width: 83px; padding-left: 10px; font-weight: 700; color: #fff; background: linear-gradient(#8a8a8a, #6c6c6c); }
.add { width: 26px; display: grid; place-items: center; background: #555; }

.status-tools { display: flex; padding-right: 4px; }
.group {
  display: flex;
  height: 27px;
  border: 1px solid #707070;
  background: #505050;
}
.group button { height: 25px; display: grid; place-items: center; }
.group .arrow { width: 15px; }
.paper-toggle { width: 41px; font-weight: 500; color: #fff; }
```
